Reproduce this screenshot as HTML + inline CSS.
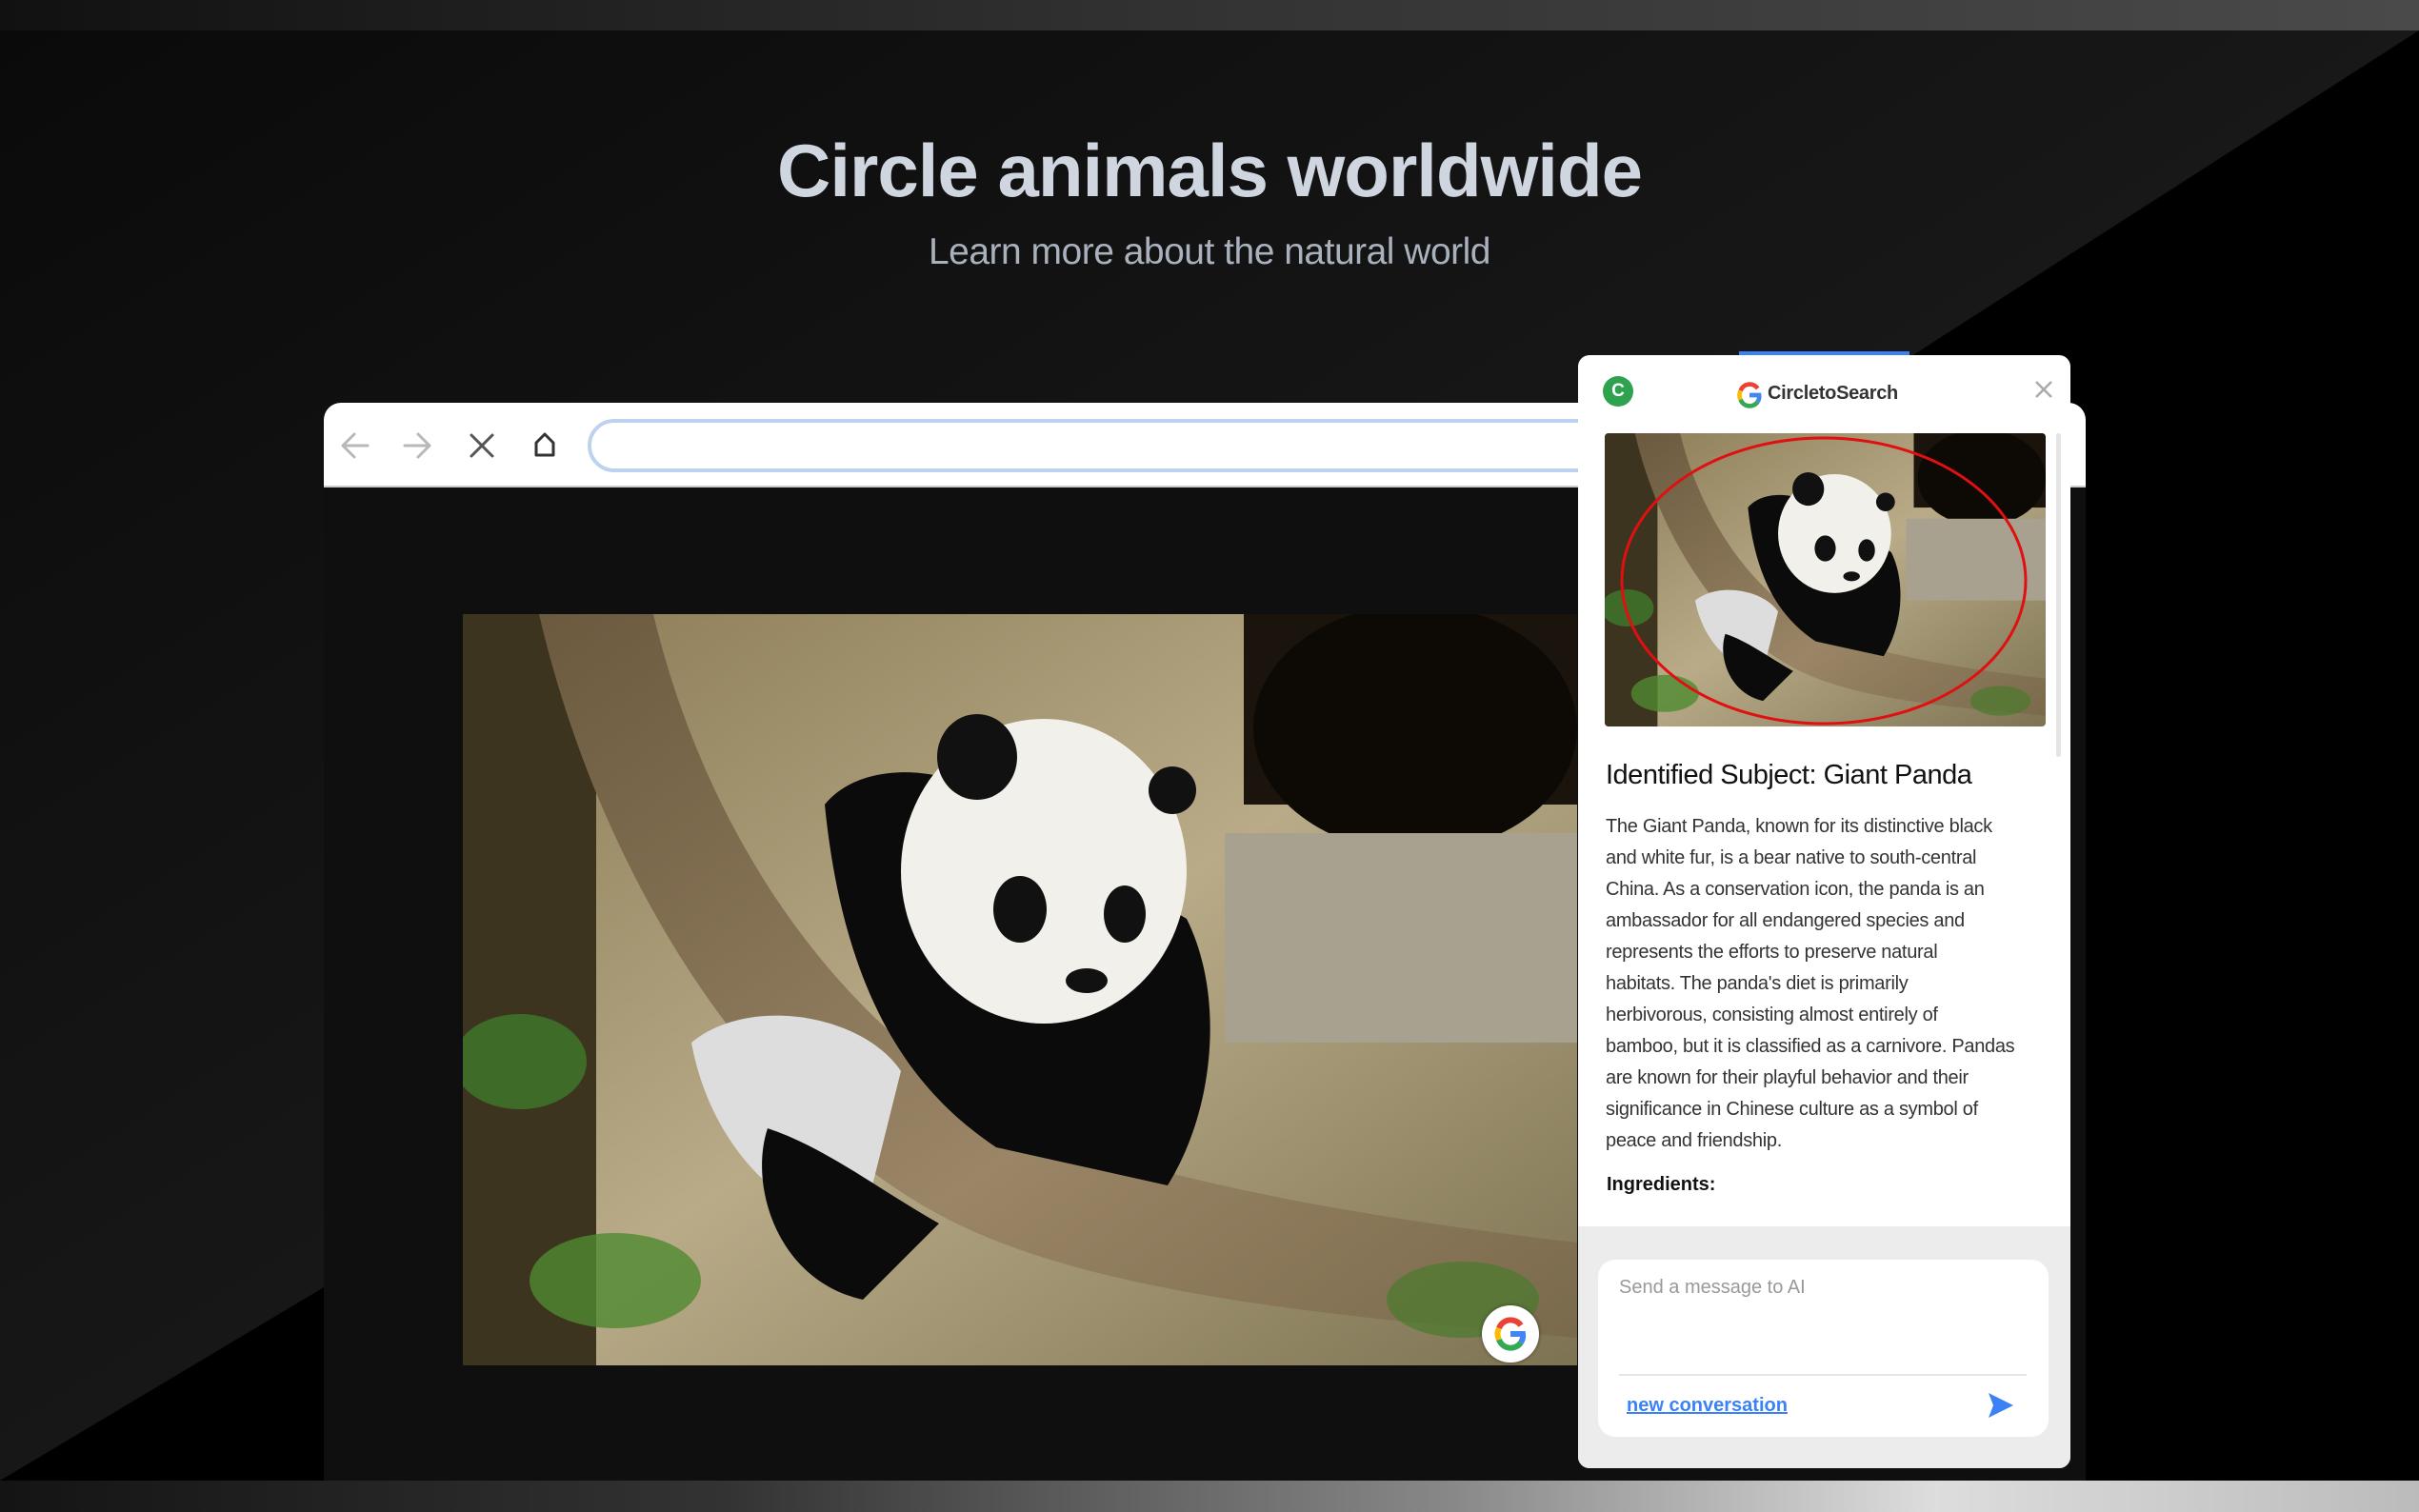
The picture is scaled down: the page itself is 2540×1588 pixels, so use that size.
<!DOCTYPE html>
<html><head><meta charset="utf-8">
<style>
*{margin:0;padding:0;box-sizing:border-box}
body{width:2540px;height:1588px;overflow:hidden;background:#111;font-family:"Liberation Sans",sans-serif;position:relative}
.abs{position:absolute}
h1{position:absolute;left:0;width:2540px;top:134px;text-align:center;font-size:78px;font-weight:bold;color:#cfd6e0;letter-spacing:-1px}
.sub{position:absolute;left:0;width:2540px;top:243px;text-align:center;font-size:39px;color:#a9b1bd;letter-spacing:-0.5px}
.panel{left:1657px;top:373px;width:517px;height:1169px;background:#fff;border-radius:12px;overflow:hidden}
.para{white-space:nowrap;font-size:20px;line-height:33px;color:#333;letter-spacing:-0.3px}
</style></head><body>
<svg class="abs" style="left:0;top:0" width="2540" height="1588">
<defs>
<linearGradient id="tb" x1="0" x2="1"><stop offset="0" stop-color="#111"/><stop offset=".5" stop-color="#333"/><stop offset="1" stop-color="#4a4a4a"/></linearGradient>
<linearGradient id="bb" x1="0" x2="1"><stop offset="0" stop-color="#141414"/><stop offset=".3" stop-color="#333"/><stop offset=".6" stop-color="#888"/><stop offset=".8" stop-color="#ddd"/><stop offset="1" stop-color="#bbb"/></linearGradient>
<linearGradient id="gr" x1="0" y1="0" x2="1" y2="1"><stop offset="0" stop-color="#0a0a0a"/><stop offset=".6" stop-color="#1a1a1a"/><stop offset="1" stop-color="#222"/></linearGradient>
</defs>
<rect x="0" y="0" width="2540" height="1588" fill="url(#gr)"/>
<polygon points="2540,32 2540,1555 340,1555 340,1444" fill="#000"/>
<polygon points="0,1555 340,1352 340,1555" fill="#000"/>
<rect x="0" y="0" width="2540" height="32" fill="url(#tb)"/>
<rect x="0" y="1555" width="2540" height="33" fill="url(#bb)"/>
<symbol id="panda" viewBox="0 0 1170 789" preserveAspectRatio="none">
<defs>
<linearGradient id="bg1" x1="0" y1="0" x2="1" y2="1"><stop offset="0" stop-color="#8a7a55"/><stop offset=".5" stop-color="#b9ab88"/><stop offset="1" stop-color="#7d7352"/></linearGradient>
<linearGradient id="tree" x1="0" y1="0" x2="1" y2="1"><stop offset="0" stop-color="#6b5a3f"/><stop offset=".6" stop-color="#9a8566"/><stop offset="1" stop-color="#7a6a4c"/></linearGradient>
</defs>
<rect width="1170" height="789" fill="url(#bg1)"/>
<rect x="820" y="0" width="350" height="200" fill="#1a140c"/>
<ellipse cx="1000" cy="120" rx="170" ry="130" fill="#0d0a06"/>
<rect x="0" y="0" width="140" height="789" fill="#3d3420"/>
<rect x="800" y="230" width="370" height="220" fill="#a8a190"/>
<path d="M80 0 L200 0 C260 250 420 480 650 560 C800 610 1000 640 1170 660 L1170 760 C950 740 700 720 540 650 C330 560 150 300 80 0Z" fill="url(#tree)"/>
<path d="M240 450 C300 400 420 420 460 480 L420 640 C340 640 260 560 240 450Z" fill="#ddd"/>
<path d="M380 200 C420 150 520 160 560 200 L760 320 C800 400 790 520 740 600 L560 560 C470 500 400 400 380 200Z" fill="#0b0b0b"/>
<ellipse cx="610" cy="270" rx="150" ry="160" fill="#f2f0ea"/>
<ellipse cx="540" cy="150" rx="42" ry="45" fill="#111"/>
<ellipse cx="745" cy="185" rx="25" ry="25" fill="#111"/>
<ellipse cx="585" cy="310" rx="28" ry="35" fill="#111"/>
<ellipse cx="695" cy="315" rx="22" ry="30" fill="#111"/>
<ellipse cx="655" cy="385" rx="22" ry="13" fill="#111"/>
<path d="M320 540 C300 600 330 700 420 720 L500 640 C430 600 380 560 320 540Z" fill="#0b0b0b"/>
<ellipse cx="60" cy="470" rx="70" ry="50" fill="#3f7a2a" opacity=".8"/>
<ellipse cx="160" cy="700" rx="90" ry="50" fill="#4f8a30" opacity=".8"/>
<ellipse cx="1050" cy="720" rx="80" ry="40" fill="#4a7a2e" opacity=".7"/>
</symbol>
</svg>

<h1>Circle animals worldwide</h1>
<div class="sub">Learn more about the natural world</div>

<!-- browser -->
<div class="abs" style="left:340px;top:423px;width:1850px;height:1132px;background:#0f0f0f;border-radius:18px 18px 0 0;overflow:hidden">
 <div class="abs" style="left:0;top:0;width:1850px;height:89px;background:#fff;border-bottom:2px solid #ccc"></div>
 <svg class="abs" style="left:0;top:0" width="640" height="89">
  <g fill="none" stroke-width="3" stroke-linecap="round" stroke-linejoin="round">
   <path d="M20 45 H46 M32 33 L20 45 L32 57" stroke="#b8b8b8"/>
   <path d="M85 45 H111 M99 33 L111 45 L99 57" stroke="#b8b8b8"/>
   <path d="M155 34 L177 56 M177 34 L155 56" stroke="#555"/>
   <path d="M223 42 L232 33 L241 42 V55 H223 Z" stroke="#333" stroke-width="3"/>
  </g>
 </svg>
 <div class="abs" style="left:277px;top:17px;width:1500px;height:56px;border:4px solid #bcd2ee;border-radius:28px"></div>
 <svg class="abs" style="left:146px;top:222px" width="1170" height="789"><use href="#panda"/></svg>
 <div class="abs" style="left:1216px;top:948px;width:60px;height:60px;border-radius:50%;background:#fff;box-shadow:0 0 4px #0006"></div>
 <svg class="abs" style="left:1228px;top:960px" width="36" height="36" viewBox="0 0 36 36">
  <g fill="none" stroke-width="6">
   <path d="M29 9 A13 13 0 0 0 6 12" stroke="#ea4335"/>
   <path d="M6 12 A13 13 0 0 0 6 24" stroke="#fbbc05"/>
   <path d="M6 24 A13 13 0 0 0 29 27" stroke="#34a853"/>
   <path d="M29 27 A13 13 0 0 0 31 18 H18" stroke="#4285f4"/>
  </g>
 </svg>
</div>

<!-- side panel -->
<div class="abs" style="left:1826px;top:369px;width:179px;height:8px;background:#3b82f6"></div>
<div class="abs panel">
 <div class="abs" style="left:26px;top:22px;width:32px;height:32px;border-radius:50%;background:#2ea24f;color:#fff;font-weight:bold;font-size:19px;text-align:center;line-height:32px">C</div>
 <svg class="abs" style="left:166px;top:28px" width="28" height="28" viewBox="0 0 36 36">
  <g fill="none" stroke-width="6">
   <path d="M29 9 A13 13 0 0 0 6 12" stroke="#ea4335"/>
   <path d="M6 12 A13 13 0 0 0 6 24" stroke="#fbbc05"/>
   <path d="M6 24 A13 13 0 0 0 29 27" stroke="#34a853"/>
   <path d="M29 27 A13 13 0 0 0 31 18 H18" stroke="#4285f4"/>
  </g>
 </svg>
 <div class="abs" style="left:199px;top:29px;font-size:20px;font-weight:bold;color:#333;letter-spacing:-0.3px">CircletoSearch</div>
 <svg class="abs" style="left:479px;top:26px" width="20" height="20"><path d="M2 2 L18 18 M18 2 L2 18" stroke="#aaa" stroke-width="2.5"/></svg>
 <div class="abs" style="left:502px;top:82px;width:5px;height:340px;background:#e4e4e4;border-radius:3px"></div>
 <svg class="abs" style="left:28px;top:82px;border-radius:4px" width="463" height="308">
  <use href="#panda" width="463" height="308"/>
  <ellipse cx="230" cy="155" rx="212" ry="150" fill="none" stroke="#e01010" stroke-width="3"/>
 </svg>
 <div class="abs" style="left:29px;top:425px;font-size:29px;color:#111;letter-spacing:-0.5px">Identified Subject: Giant Panda</div>
 <div class="abs para" style="left:29px;top:479px">The Giant Panda, known for its distinctive black<br>and white fur, is a bear native to south-central<br>China. As a conservation icon, the panda is an<br>ambassador for all endangered species and<br>represents the efforts to preserve natural<br>habitats. The panda's diet is primarily<br>herbivorous, consisting almost entirely of<br>bamboo, but it is classified as a carnivore. Pandas<br>are known for their playful behavior and their<br>significance in Chinese culture as a symbol of<br>peace and friendship.</div>
 <div class="abs" style="left:30px;top:860px;font-size:20px;font-weight:bold;color:#111">Ingredients:</div>
 <div class="abs" style="left:0;top:915px;width:517px;height:254px;background:#ececec">
  <div class="abs" style="left:21px;top:35px;width:473px;height:186px;background:#fff;border-radius:18px">
   <div class="abs" style="left:22px;top:18px;font-size:20px;color:#999">Send a message to AI</div>
   <div class="abs" style="left:22px;top:120px;width:428px;height:2px;background:#e6e6e6"></div>
   <div class="abs" style="left:30px;top:142px;font-size:20px;font-weight:bold;color:#3b82f6;text-decoration:underline">new conversation</div>
   <svg class="abs" style="left:408px;top:138px" width="30" height="30" viewBox="0 0 30 30"><path d="M2 2 L28 15 L2 28 L7 15 Z" fill="#3b82f6"/></svg>
  </div>
 </div>
</div>
</body></html>
